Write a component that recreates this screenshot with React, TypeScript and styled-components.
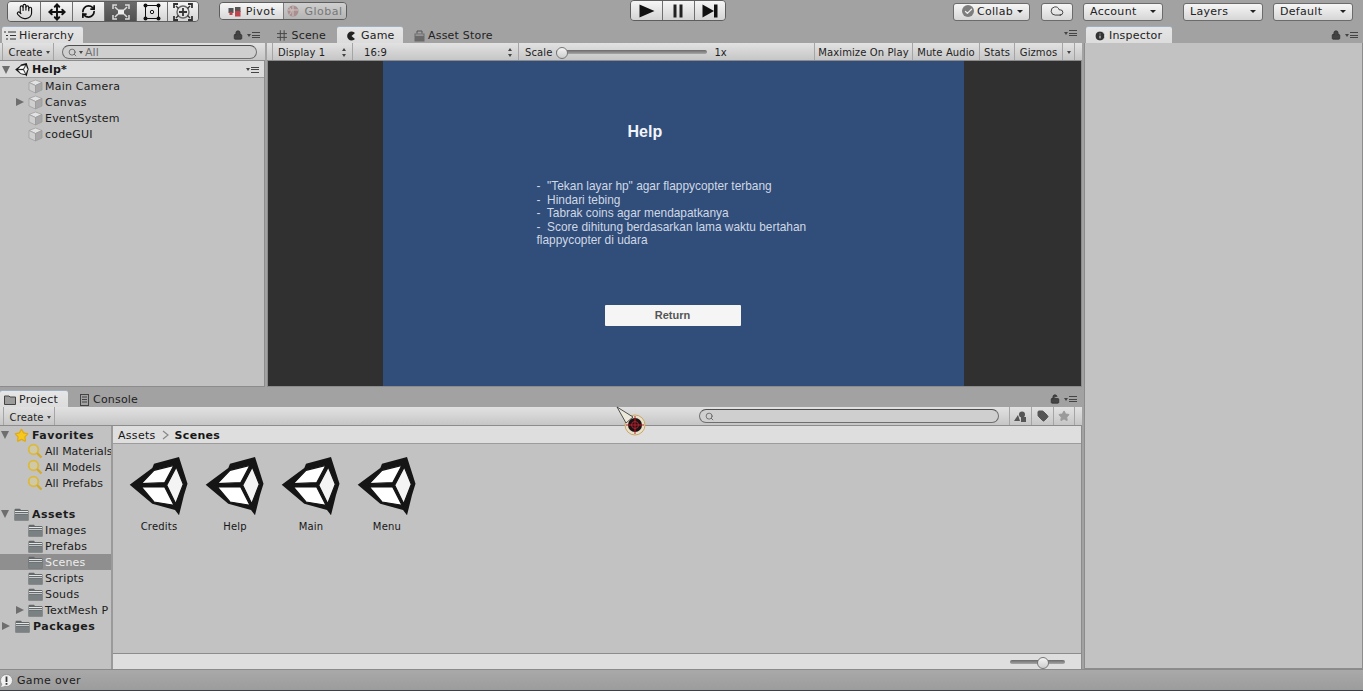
import React from 'react';
import styled, { createGlobalStyle, css } from 'styled-components';
import { Hand, Move, RefreshCw, Cloud, Check, Lock, LockOpen, Info, Star, Tag, Search } from 'lucide-react';

const GlobalStyle = createGlobalStyle`
  html, body { margin: 0; padding: 0; width: 1363px; height: 691px; overflow: hidden; background: #a2a2a2; }
  body { font-family: "DejaVu Sans", "Liberation Sans", sans-serif; font-size: 11px; color: #161616; }
  * { box-sizing: border-box; }
`;

const Page = styled.div`
  position: relative;
  width: 1363px;
  height: 691px;
  display: flex;
  flex-direction: column;
  background: #a2a2a2;
`;

/* ---------- top toolbar ---------- */
const TopBar = styled.div`
  height: 27px;
  flex: none;
  display: grid;
  grid-template-columns: 630px 96px 1fr;
  align-items: start;
`;

const TopLeft = styled.div`
  display: flex;
  padding: 1px 0 0 7px;
  gap: 20px;
`;

const TopRight = styled.div`
  display: flex;
  padding: 3px 10px 0 0;
  justify-content: flex-end;
`;

const Segmented = styled.div<{ $h: number }>`
  display: flex;
  height: ${p => p.$h}px;
  border: 1px solid #5d5d5d;
  border-radius: 4px;
  overflow: hidden;
`;

const ToolButton = styled.div<{ $active?: boolean; $w?: number }>`
  width: ${p => p.$w ?? 32}px;
  display: flex;
  align-items: center;
  justify-content: center;
  color: #111;
  background: linear-gradient(#f6f6f6, #d4d4d4);
  & + & { border-left: 1px solid #6f6f6f; }
  ${p => p.$active && css`
    background: linear-gradient(#6a6a6a, #505050);
    color: #f2f2f2;
  `}
`;

const PivotPair = styled(Segmented)`
  margin-top: 1px;
  font-size: 11px;
  letter-spacing: 0.5px;
`;

const PivotButton = styled.div<{ $off?: boolean }>`
  width: 63px;
  display: flex;
  align-items: center;
  justify-content: center;
  gap: 5px;
  color: ${p => (p.$off ? '#777' : '#222')};
  background: ${p => (p.$off ? 'linear-gradient(#cfcfcf, #b4b4b4)' : 'linear-gradient(#f6f6f6, #d8d8d8)')};
  & + & { border-left: 1px solid #7a7a7a; }
`;

const DropButton = styled.div<{ $w: number; $ml: number; $center?: boolean }>`
  width: ${p => p.$w}px;
  margin-left: ${p => p.$ml}px;
  height: 18px;
  padding: 0 6px 2px;
  display: flex;
  align-items: center;
  justify-content: ${p => (p.$center ? 'center' : 'space-between')};
  font-size: 11px;
  letter-spacing: 0.3px;
  color: #222;
  border: 1px solid #6b6b6b;
  border-radius: 3px;
  background: linear-gradient(#f6f6f6, #d6d6d6);
`;

const CollabLabel = styled.span`
  display: flex;
  align-items: center;
  gap: 3px;
  margin-left: 2px;
`;

const CollabBadge = styled.span`
  width: 12px;
  height: 12px;
  border-radius: 50%;
  background: #7d7d7d;
  color: #eee;
  display: flex;
  align-items: center;
  justify-content: center;
`;

const Caret = styled.span`
  flex: none;
  width: 0;
  height: 0;
  border-left: 3px solid transparent;
  border-right: 3px solid transparent;
  border-top: 3px solid #222;
`;

/* ---------- panels ---------- */
const Workspace = styled.div`
  flex: none;
  height: 642px;
  display: grid;
  grid-template-columns: 1082px 1fr;
  column-gap: 2px;
`;

const LeftStack = styled.div`
  display: grid;
  grid-template-rows: 360px 1fr;
  row-gap: 4px;
  min-height: 0;
`;

const TopRow = styled.div`
  display: grid;
  grid-template-columns: 265px 1fr;
  column-gap: 2px;
  min-height: 0;
`;

const Panel = styled.section`
  display: flex;
  flex-direction: column;
  min-width: 0;
  min-height: 0;
`;

const TabStrip = styled.div`
  height: 16px;
  flex: none;
  display: flex;
  align-items: flex-end;
  position: relative;
  padding-left: 2px;
`;

const Tab = styled.div<{ $active?: boolean; $w: number; $ml?: number; $pl?: number; $gap?: number }>`
  width: ${p => p.$w}px;
  margin-left: ${p => p.$ml ?? 0}px;
  padding: 1px 0 0 ${p => p.$pl ?? 0}px;
  height: 16px;
  display: flex;
  align-items: center;
  gap: ${p => p.$gap ?? 3}px;
  font-size: 11px;
  letter-spacing: 0.2px;
  white-space: nowrap;
  color: #222;
  background: ${p => (p.$active ? 'linear-gradient(#e6e6e6, #dcdcdc)' : 'transparent')};
  border-radius: 2px 2px 0 0;
  ${p => p.$active && css`box-shadow: 0 -1px 0 #9fb0c4;`}
`;

const PaneMenu = styled.div`
  position: absolute;
  right: 5px;
  top: 3px;
  display: flex;
  align-items: center;
  gap: 4px;
  color: #333;
`;

const MenuGlyph = styled.span<{ $r?: number }>`
  display: inline-flex;
  align-items: center;
  gap: 1px;
  margin-right: ${p => p.$r ?? 0}px;
`;

const MenuLines = styled.span`
  width: 8px;
  height: 6px;
  border-top: 1px solid #444;
  border-bottom: 1px solid #444;
  position: relative;
  &::after {
    content: '';
    position: absolute;
    left: 0;
    right: 0;
    top: 1.5px;
    height: 1px;
    background: #444;
  }
`;

const Strip = styled.div<{ $h: number }>`
  height: ${p => p.$h}px;
  flex: none;
  display: flex;
  align-items: stretch;
  background: linear-gradient(#e2e2e2, #c6c6c6);
  border-bottom: 1px solid #8c8c8c;
  font-size: 10px;
  letter-spacing: 0.1px;
  color: #1e1e1e;
`;

const StripButton = styled.div<{ $w: number; $ml?: number; $between?: boolean }>`
  width: ${p => p.$w}px;
  margin-left: ${p => p.$ml ?? 0}px;
  flex: none;
  display: flex;
  align-items: center;
  justify-content: ${p => (p.$between ? 'space-between' : 'center')};
  gap: 4px;
  padding: 1px 5px 0;
  white-space: nowrap;
  border-left: 1px solid #a5a5a5;
  border-right: 1px solid #a5a5a5;
  & + & { border-left: 0; }
`;

const CreateButton = styled(StripButton)`
  padding: 1px 2px 0 5px;
`;

const ProjectCreate = styled(CreateButton)`
  padding-top: 3px;
`;

const TinyCaret = styled.span`
  width: 0;
  height: 0;
  flex: none;
  border-left: 2.5px solid transparent;
  border-right: 2.5px solid transparent;
  border-top: 3px solid #444;
`;

const UpDown = styled.span`
  width: 5px;
  height: 9px;
  flex: none;
  display: flex;
  flex-direction: column;
  justify-content: space-between;
  &::before, &::after {
    content: '';
    width: 0;
    height: 0;
    border-left: 2.5px solid transparent;
    border-right: 2.5px solid transparent;
  }
  &::before { border-bottom: 3px solid #444; }
  &::after { border-top: 3px solid #444; }
`;

const SearchPill = styled.div<{ $w: number; $ml: number }>`
  width: ${p => p.$w}px;
  height: 14px;
  margin: 2px 0 0 ${p => p.$ml}px;
  flex: none;
  display: flex;
  align-items: center;
  gap: 2px;
  padding-left: 5px;
  font-size: 11px;
  color: #707070;
  border: 1px solid #6e6e6e;
  border-top-color: #4e4e4e;
  border-radius: 7px;
  background: #cfcfcf;
`;

const Body = styled.div`
  flex: 1;
  min-height: 0;
  background: #c2c2c2;
  border: 1px solid #8c8c8c;
  border-top: 0;
  display: flex;
  flex-direction: column;
`;

const HierarchyBody = styled(Body)`
  border-left: 0;
`;

/* ---------- tree rows ---------- */
const SceneHeader = styled.div`
  height: 17px;
  flex: none;
  display: flex;
  align-items: center;
  padding: 1px 4px 0 2px;
  gap: 3px;
  background: #dcdcdc;
  border-bottom: 1px solid #9c9c9c;
  font-weight: 700;
  font-size: 11px;
  letter-spacing: 0.2px;
`;

const TreeRow = styled.div<{ $indent: number; $selected?: boolean; $bold?: boolean }>`
  height: 16px;
  flex: none;
  display: flex;
  align-items: center;
  gap: ${p => (p.$bold ? 3 : 2)}px;
  padding-left: ${p => p.$indent}px;
  white-space: nowrap;
  overflow: hidden;
  font-size: 11px;
  letter-spacing: ${p => (p.$bold ? '0.5px' : '0.2px')};
  font-weight: ${p => (p.$bold ? 700 : 400)};
  color: ${p => (p.$selected ? '#ededed' : '#1c1c1c')};
  background: ${p => (p.$selected ? '#8f8f8f' : 'transparent')};
  svg { flex: none; }
`;

const FavouriteRow = styled(TreeRow)`
  letter-spacing: 0;
`;

const Fold = styled.span<{ $open?: boolean; $hidden?: boolean }>`
  width: 0;
  height: 0;
  flex: none;
  margin-right: 2px;
  visibility: ${p => (p.$hidden ? 'hidden' : 'visible')};
  ${p => p.$open
    ? css`
        border-left: 4.5px solid transparent;
        border-right: 4.5px solid transparent;
        border-top: 8px solid #6e6e6e;
      `
    : css`
        margin-left: 1px;
        border-top: 4.5px solid transparent;
        border-bottom: 4.5px solid transparent;
        border-left: 8px solid #6e6e6e;
      `}
`;

const Spacer = styled.div<{ $h: number }>`
  height: ${p => p.$h}px;
  flex: none;
`;

const Push = styled.div`
  flex: 1;
`;

/* ---------- game view ---------- */
const ScaleLabel = styled.div`
  margin-left: 6px;
  padding-top: 1px;
  display: flex;
  align-items: center;
  width: 289px;
`;

const SliderTrack = styled.div<{ $w: number; $at: number }>`
  position: relative;
  width: ${p => p.$w}px;
  height: 4px;
  border-radius: 2px;
  background: linear-gradient(#6a6a6a, #a6a6a6);
  &::after {
    content: '';
    position: absolute;
    left: ${p => p.$at}px;
    top: -3px;
    width: 10px;
    height: 10px;
    border-radius: 50%;
    border: 1px solid #777;
    background: linear-gradient(#f4f4f4, #cdcdcd);
  }
`;

const ScaleSlider = styled(SliderTrack)`
  margin: 0 7px 0 4px;
`;

const GameBackdrop = styled.div`
  flex: 1;
  min-height: 0;
  background: #303030;
  display: flex;
  justify-content: center;
  border-bottom: 1px solid #8c8c8c;
  border-right: 1px solid #8c8c8c;
  border-left: 1px solid #8c8c8c;
`;

const GameCanvas = styled.div`
  width: 581px;
  margin-left: -3px;
  background: #314d79;
  font-family: "Liberation Sans", Arial, sans-serif;
  display: flex;
  flex-direction: column;
`;

const HelpTitle = styled.h1`
  margin: 62px 0 0 245px;
  font-size: 16px;
  line-height: 18px;
  font-weight: 700;
  color: #f1f4f8;
`;

const HelpText = styled.div`
  margin: 39px 0 0 154px;
  width: 290px;
  font-size: 11.9px;
  line-height: 13.5px;
  color: #cfd8e6;
  white-space: pre-wrap;
`;

const ReturnButton = styled.div`
  margin: 57px 0 0 222px;
  width: 136px;
  height: 21px;
  display: flex;
  align-items: center;
  justify-content: center;
  font-size: 11px;
  font-weight: 700;
  color: #555;
  background: #f5f5f5;
  border-radius: 1px;
`;

/* ---------- project ---------- */
const ProjectBody = styled(Body)`
  flex-direction: row;
  border-left: 0;
  border-bottom: 0;
`;

const Tree = styled.div`
  width: 113px;
  flex: none;
  padding-top: 1px;
  border-right: 2px solid #9a9a9a;
  display: flex;
  flex-direction: column;
  overflow: hidden;
`;

const AssetPane = styled.div`
  flex: 1;
  min-width: 0;
  display: flex;
  flex-direction: column;
`;

const Breadcrumb = styled.div`
  height: 18px;
  flex: none;
  display: flex;
  align-items: center;
  gap: 6px;
  padding: 1px 0 0 5px;
  font-size: 11px;
  background: #dedede;
  border-bottom: 1px solid #9c9c9c;
`;

const Crumb = styled.span<{ $bold?: boolean }>`
  font-weight: ${p => (p.$bold ? 700 : 400)};
  letter-spacing: 0.3px;
`;

const AssetGrid = styled.div`
  flex: 1;
  display: flex;
  align-items: flex-start;
  padding: 13px 0 0 8px;
`;

const Asset = styled.div`
  width: 76px;
  display: flex;
  flex-direction: column;
  align-items: center;
  font-size: 10px;
  letter-spacing: 0.2px;
  gap: 4px;
`;

const BottomBar = styled.div`
  height: 16px;
  flex: none;
  display: flex;
  align-items: center;
  justify-content: flex-end;
  padding-right: 16px;
  background: #dedede;
  border-top: 1px solid #8c8c8c;
`;

const ProjectIcons = styled.div`
  display: flex;
  margin-left: 10px;
  align-items: stretch;
`;

const IconCell = styled.div`
  width: 22px;
  display: flex;
  align-items: center;
  justify-content: center;
  border-left: 1px solid #a5a5a5;
  &:last-child { border-right: 1px solid #a5a5a5; }
`;

const StatusBar = styled.div`
  flex: none;
  height: 22px;
  display: flex;
  align-items: center;
  gap: 4px;
  padding-top: 1px;
  font-size: 11px;
  letter-spacing: 0.35px;
  color: #1d1d1d;
  background: linear-gradient(#a9a9a9, #9c9c9c);
  border-top: 1px solid #8a8a8a;
  border-bottom: 1px solid #3f4045;
`;

const Cursor = styled.svg`
  position: absolute;
  left: 615px;
  top: 404px;
`;

const LogoSvg = styled.svg`
  display: block;
  filter: blur(0.35px);
`;

/* ---------- drawn icons ---------- */
const UnityLogo: React.FC<{ size: number }> = ({ size }) => (
  <LogoSvg width={size} height={size} viewBox="0 0 60 60">
    <path d="M0.7 27.7 L23.3 11 L25 6.7 L50 0 L58.5 26.7 L55 38 L50 58.3 L46 53 L23.3 46.7 Z" fill="#151515" />
    <g stroke="#151515" strokeWidth="1.2">
      <path d="M12.3 26.7 L25 13.3 L45 8.3 L35.7 25.7 Z" fill="#fff" />
      <path d="M47.3 10 L54.3 27.3 L46.7 46.7 L37.7 28.3 Z" fill="#f4f4f4" />
      <path d="M12.3 30 L35.7 30 L45 48.3 L25 45 Z" fill="#fff" />
    </g>
  </LogoSvg>
);

const CubeIcon = () => (
  <svg width="15" height="15" viewBox="0 0 15 15">
    <path d="M7.5 1 L14 3.5 L7.5 6.5 L1 3.5 Z" fill="#e2e2e2" stroke="#9a9a9a" strokeWidth="0.7" />
    <path d="M1 3.5 L7.5 6.5 V14 L1 11 Z" fill="#cfcfcf" stroke="#9a9a9a" strokeWidth="0.7" />
    <path d="M14 3.5 L7.5 6.5 V14 L14 11 Z" fill="#a8a8a8" stroke="#9a9a9a" strokeWidth="0.7" />
  </svg>
);

const FolderIcon = () => (
  <svg width="15" height="13" viewBox="0 0 15 13">
    <path d="M0.5 2 Q0.5 0.8 1.5 0.8 H6 L7 2 H13.5 Q14.5 2 14.5 3 V12.5 H0.5 Z" fill="#63696a" />
    <path d="M1 3 H14 V4 H1 Z" fill="#e4e6e6" />
    <path d="M1 5 H14 V6 H1 Z" fill="#c4c8c8" />
    <path d="M0.5 6.5 H14.5 V12.5 H0.5 Z" fill="#7b8182" />
  </svg>
);

const SavedSearch = () => (
  <svg width="16" height="16" viewBox="0 0 16 16">
    <circle cx="6.5" cy="6.5" r="4.8" fill="#cfc9a8" stroke="#dcb93a" strokeWidth="1.8" />
    <path d="M10 10 L14.5 14.5" stroke="#d2ab2e" strokeWidth="2.4" />
  </svg>
);

const ScaleTool = () => (
  <svg width="18" height="16" viewBox="0 0 18 16" fill="none" stroke="#dcdcdc" strokeWidth="1.5">
    <path d="M1 5 V1 H5 M13 1 H17 V5 M17 11 V15 H13 M5 15 H1 V11 M3 3 L6 6 M15 3 L12 6 M15 13 L12 10 M3 13 L6 10" />
    <rect x="6" y="5.5" width="6" height="5" fill="#ededed" stroke="none" />
  </svg>
);

const RectTool = () => (
  <svg width="18" height="18" viewBox="0 0 18 18" fill="#111">
    <rect x="2.5" y="2.5" width="13" height="13" fill="none" stroke="#111" />
    <circle cx="2.5" cy="2.5" r="2" />
    <circle cx="15.5" cy="2.5" r="2" />
    <circle cx="2.5" cy="15.5" r="2" />
    <circle cx="15.5" cy="15.5" r="2" />
    <circle cx="9" cy="9" r="1.7" fill="none" stroke="#111" />
  </svg>
);

const TransformTool = () => (
  <svg width="20" height="18" viewBox="0 0 20 18" fill="none" stroke="#333" strokeWidth="1.4">
    <path d="M1 5 V1 H5 M15 1 H19 V5 M19 13 V17 H15 M5 17 H1 V13" strokeWidth="1.8" />
    <circle cx="10" cy="9" r="6" stroke="#666" />
    <path d="M10 5 V13 M6 9 H14" strokeWidth="1.8" />
    <path d="M3 3 L5.5 5.5 M17 3 L14.5 5.5 M17 15 L14.5 12.5 M3 15 L5.5 12.5" />
  </svg>
);

const PlayIcon = () => (
  <svg width="16" height="14" viewBox="0 0 16 14" fill="#111"><path d="M0.5 0.5 L15.5 7 L0.5 13.5 Z" /></svg>
);

const PauseIcon = () => (
  <svg width="10" height="14" viewBox="0 0 10 14" fill="#222">
    <rect x="0.5" y="0.5" width="3" height="13" />
    <rect x="6.5" y="0.5" width="3" height="13" />
  </svg>
);

const StepIcon = () => (
  <svg width="16" height="14" viewBox="0 0 16 14" fill="#111">
    <path d="M0.5 0.5 L12 7 L0.5 13.5 Z" />
    <rect x="12" y="0.5" width="3.5" height="13" />
  </svg>
);

const PivotIcon = () => (
  <svg width="13" height="11" viewBox="0 0 13 11">
    <rect x="0.5" y="2" width="5" height="5" fill="#555" />
    <rect x="7" y="1" width="5.5" height="5" fill="#555" />
    <rect x="7" y="5" width="5.5" height="5.5" fill="#c0424a" />
    <rect x="1.5" y="6" width="3" height="3" fill="#c0424a" />
  </svg>
);

const GlobeIcon = () => (
  <svg width="12" height="12" viewBox="0 0 12 12">
    <circle cx="6" cy="6" r="5.5" fill="#a98f8f" />
    <path d="M1 5 H11 M6 1 V11 M2.5 2.5 Q6 6 2.5 9.5" stroke="#d0c6c6" fill="none" />
  </svg>
);

const SceneGrid = () => (
  <svg width="11" height="11" viewBox="0 0 11 11" stroke="#444" strokeWidth="1">
    <path d="M3.5 0 V11 M7.5 0 V11 M0 3.5 H11 M0 7.5 H11" />
  </svg>
);

const GamePac = () => (
  <svg width="9" height="10" viewBox="0 0 9 10">
    <path d="M8 2 A4.5 4.5 0 1 0 8 8 L4.5 5 Z" fill="#222" />
  </svg>
);

const StoreBag = () => (
  <svg width="11" height="12" viewBox="0 0 11 12">
    <rect x="0.5" y="3.5" width="10" height="8" fill="#6a6a6a" />
    <path d="M3 3.5 V1 H8 V3.5" fill="none" stroke="#555" />
    <rect x="1.5" y="4.5" width="8" height="1.2" fill="#a8a8a8" />
  </svg>
);

const HierarchyGlyph = () => (
  <svg width="12" height="9" viewBox="0 0 12 9" stroke="#333" strokeWidth="1">
    <path d="M0 1 H2 M4 1 H12 M2 4.5 H4 M6 4.5 H12 M2 8 H4 M6 8 H12" />
  </svg>
);

const ProjectFolder = () => (
  <svg width="12" height="10" viewBox="0 0 12 10">
    <path d="M0.5 1 H5 L6 2 H11.5 V9.5 H0.5 Z" fill="#9c9c9c" stroke="#444" />
  </svg>
);

const ConsoleGlyph = () => (
  <svg width="9" height="12" viewBox="0 0 9 12" fill="none" stroke="#444">
    <rect x="0.5" y="0.5" width="8" height="11" />
    <path d="M2 3 H7 M2 5.5 H7 M2 8 H7" />
  </svg>
);

const FilterType = () => (
  <svg width="13" height="11" viewBox="0 0 13 11" fill="#555">
    <path d="M0 10 L4 4 L6 10 Z" />
    <circle cx="8" cy="3.5" r="3" />
    <rect x="7" y="6" width="5" height="5" />
  </svg>
);

const WarnBubble = () => (
  <svg width="13" height="14" viewBox="0 0 13 14">
    <circle cx="6.5" cy="6.5" r="6" fill="#f1f1f1" stroke="#7a7a7a" strokeWidth="0.6" />
    <path d="M1 13 L3 9 L5 12 Z" fill="#f1f1f1" />
    <rect x="5.6" y="2.5" width="1.8" height="5.5" fill="#3a3a3a" />
    <rect x="5.6" y="9" width="1.8" height="1.8" fill="#3a3a3a" />
  </svg>
);

const Menu: React.FC<{ lock?: 'closed' | 'open' }> = ({ lock }) => (
  <PaneMenu>
    {lock === 'closed' && <Lock size={10} fill="#444" strokeWidth={2} />}
    {lock === 'open' && <LockOpen size={10} fill="#444" strokeWidth={2} />}
    <MenuGlyph>
      <TinyCaret />
      <MenuLines />
    </MenuGlyph>
  </PaneMenu>
);

const hierarchyItems = [
  { name: 'Main Camera' },
  { name: 'Canvas', expandable: true },
  { name: 'EventSystem' },
  { name: 'codeGUI' },
];

const favourites = ['All Materials', 'All Models', 'All Prefabs'];
const assetFolders = ['Images', 'Prefabs', 'Scenes', 'Scripts', 'Souds'];
const scenes = ['Credits', 'Help', 'Main', 'Menu'];

const helpText = `-  "Tekan layar hp" agar flappycopter terbang
-  Hindari tebing
-  Tabrak coins agar mendapatkanya
-  Score dihitung berdasarkan lama waktu bertahan
flappycopter di udara`;

const App: React.FC = () => (
  <Page>
    <GlobalStyle />

    <TopBar>
      <TopLeft>
        <Segmented $h={21}>
          <ToolButton $w={32}><Hand size={17} strokeWidth={1.6} /></ToolButton>
          <ToolButton $w={32}><Move size={18} strokeWidth={2.6} /></ToolButton>
          <ToolButton $w={32}><RefreshCw size={15} strokeWidth={2.8} /></ToolButton>
          <ToolButton $w={32} $active><ScaleTool /></ToolButton>
          <ToolButton $w={31}><RectTool /></ToolButton>
          <ToolButton $w={31}><TransformTool /></ToolButton>
        </Segmented>
        <PivotPair $h={18}>
          <PivotButton><PivotIcon />Pivot</PivotButton>
          <PivotButton $off><GlobeIcon />Global</PivotButton>
        </PivotPair>
      </TopLeft>

      <Segmented $h={21}>
        <ToolButton $w={32}><PlayIcon /></ToolButton>
        <ToolButton $w={32}><PauseIcon /></ToolButton>
        <ToolButton $w={32}><StepIcon /></ToolButton>
      </Segmented>

      <TopRight>
        <DropButton $w={77} $ml={0}>
          <CollabLabel>
            <CollabBadge><Check size={9} strokeWidth={3.5} /></CollabBadge>
            Collab
          </CollabLabel>
          <Caret />
        </DropButton>
        <DropButton $w={32} $ml={11} $center>
          <Cloud size={14} strokeWidth={1.4} />
        </DropButton>
        <DropButton $w={80} $ml={10}>Account<Caret /></DropButton>
        <DropButton $w={80} $ml={20}>Layers<Caret /></DropButton>
        <DropButton $w={80} $ml={10}>Default<Caret /></DropButton>
      </TopRight>
    </TopBar>

    <Workspace>
      <LeftStack>
        <TopRow>
          <Panel>
            <TabStrip>
              <Tab $active $w={81} $pl={2}><HierarchyGlyph />Hierarchy</Tab>
              <Menu lock="closed" />
            </TabStrip>
            <Strip $h={18}>
              <CreateButton $w={52} $ml={2}>Create<TinyCaret /></CreateButton>
              <SearchPill $w={195} $ml={8}><Search size={9} color="#555" /><TinyCaret />All</SearchPill>
            </Strip>
            <HierarchyBody>
              <SceneHeader>
                <Fold $open />
                <UnityLogo size={14} />
                Help*
                <Push />
                <MenuGlyph $r={1}><TinyCaret /><MenuLines /></MenuGlyph>
              </SceneHeader>
              {hierarchyItems.map(item => (
                <TreeRow key={item.name} $indent={15}>
                  <Fold $hidden={!item.expandable} />
                  <CubeIcon />
                  {item.name}
                </TreeRow>
              ))}
            </HierarchyBody>
          </Panel>

          <Panel>
            <TabStrip>
              <Tab $w={49} $ml={8} $gap={4}><SceneGrid />Scene</Tab>
              <Tab $active $w={66} $ml={11} $pl={10} $gap={5}><GamePac />Game</Tab>
              <Tab $w={80} $ml={11}><StoreBag />Asset Store</Tab>
              <Menu />
            </TabStrip>
            <Strip $h={18}>
              <StripButton $w={81} $ml={5} $between>Display 1<UpDown /></StripButton>
              <StripButton $w={160} $ml={6} $between>16:9<UpDown /></StripButton>
              <ScaleLabel>
                Scale
                <ScaleSlider $w={151} $at={0} />
                1x
              </ScaleLabel>
              <StripButton $w={99}>Maximize On Play</StripButton>
              <StripButton $w={67}>Mute Audio</StripButton>
              <StripButton $w={35}>Stats</StripButton>
              <StripButton $w={48}>Gizmos</StripButton>
              <StripButton $w={12}><TinyCaret /></StripButton>
            </Strip>
            <GameBackdrop>
              <GameCanvas>
                <HelpTitle>Help</HelpTitle>
                <HelpText>{helpText}</HelpText>
                <ReturnButton>Return</ReturnButton>
              </GameCanvas>
            </GameBackdrop>
          </Panel>
        </TopRow>

        <Panel>
          <TabStrip>
            <Tab $active $w={68} $ml={-2} $pl={4}><ProjectFolder />Project</Tab>
            <Tab $w={78} $ml={3} $pl={9} $gap={4}><ConsoleGlyph />Console</Tab>
            <Menu lock="open" />
          </TabStrip>
          <Strip $h={19}>
            <ProjectCreate $w={52} $ml={3}>Create<TinyCaret /></ProjectCreate>
            <SearchPill $w={300} $ml={644}><Search size={9} color="#555" /></SearchPill>
            <ProjectIcons>
              <IconCell><FilterType /></IconCell>
              <IconCell><Tag size={12} fill="#555" color="#555" /></IconCell>
              <IconCell><Star size={12} fill="#9a9a9a" color="#9a9a9a" /></IconCell>
            </ProjectIcons>
          </Strip>
          <ProjectBody>
            <Tree>
              <TreeRow $indent={1} $bold>
                <Fold $open />
                <Star size={15} fill="#f6c81e" color="#e0ab14" />
                Favorites
              </TreeRow>
              {favourites.map(name => (
                <FavouriteRow key={name} $indent={27}><SavedSearch />{name}</FavouriteRow>
              ))}
              <Spacer $h={15} />
              <TreeRow $indent={1} $bold><Fold $open /><FolderIcon />Assets</TreeRow>
              {assetFolders.map(name => (
                <TreeRow key={name} $indent={28} $selected={name === 'Scenes'}><FolderIcon />{name}</TreeRow>
              ))}
              <TreeRow $indent={15}><Fold /><FolderIcon />TextMesh P</TreeRow>
              <TreeRow $indent={1} $bold><Fold /><FolderIcon />Packages</TreeRow>
            </Tree>
            <AssetPane>
              <Breadcrumb>
                <Crumb>Assets</Crumb>
                <svg width="7" height="10" viewBox="0 0 7 10" fill="none" stroke="#888" strokeWidth="1.2"><path d="M1 1 L6 5 L1 9" /></svg>
                <Crumb $bold>Scenes</Crumb>
              </Breadcrumb>
              <AssetGrid>
                {scenes.map(name => (
                  <Asset key={name}>
                    <UnityLogo size={60} />
                    {name}
                  </Asset>
                ))}
              </AssetGrid>
              <BottomBar>
                <SliderTrack $w={55} $at={27} />
              </BottomBar>
            </AssetPane>
          </ProjectBody>
        </Panel>
      </LeftStack>

      <Panel>
        <TabStrip>
          <Tab $active $w={86} $pl={8}><Info size={12} fill="#333" color="#eee" />Inspector</Tab>
          <Menu lock="closed" />
        </TabStrip>
        <Body />
      </Panel>
    </Workspace>

    <StatusBar>
      <WarnBubble />
      Game over
    </StatusBar>

    <Cursor width="34" height="36" viewBox="0 0 34 36">
      <circle cx="20" cy="21" r="10" fill="#e9e2c8" stroke="#c9a86a" />
      <path d="M2 3 L18 13 L11 19 Z" fill="#ece8da" stroke="#2a2a2a" strokeWidth="0.8" />
      <circle cx="20" cy="21" r="7" fill="#1d1114" />
      <circle cx="20" cy="21" r="3.5" fill="none" stroke="#b3202c" />
      <path d="M11 21 H29 M20 12 V30" stroke="#b3202c" strokeWidth="1" />
    </Cursor>
  </Page>
);

export default App;
